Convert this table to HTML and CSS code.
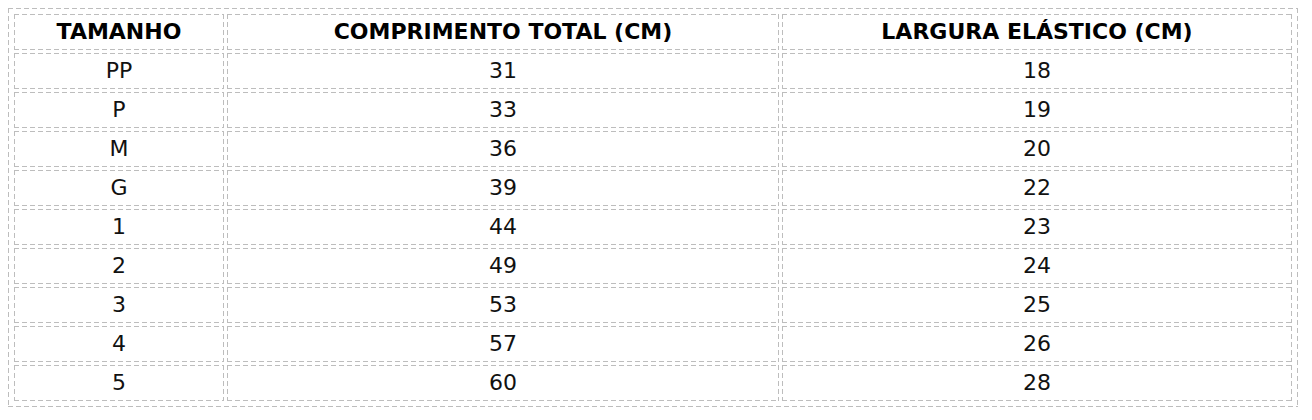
FILE: index.html
```html
<!DOCTYPE html>
<html lang="pt-BR">
<head>
<meta charset="utf-8">
<title>Tabela de medidas</title>
<link rel="stylesheet" href="styles.css">
</head>
<body>
<table class="sizes">
  <thead>
    <tr>
      <th class="c1">TAMANHO</th>
      <th class="c2">COMPRIMENTO TOTAL (CM)</th>
      <th class="c3">LARGURA ELÁSTICO (CM)</th>
    </tr>
  </thead>
  <tbody>
    <tr><td>PP</td><td>31</td><td>18</td></tr>
    <tr><td>P</td><td>33</td><td>19</td></tr>
    <tr><td>M</td><td>36</td><td>20</td></tr>
    <tr><td>G</td><td>39</td><td>22</td></tr>
    <tr><td>1</td><td>44</td><td>23</td></tr>
    <tr><td>2</td><td>49</td><td>24</td></tr>
    <tr><td>3</td><td>53</td><td>25</td></tr>
    <tr><td>4</td><td>57</td><td>26</td></tr>
    <tr><td>5</td><td>60</td><td>28</td></tr>
  </tbody>
</table>
</body>
</html>
```

FILE: styles.css
```css
html, body {
  background: #ffffff;
}
body {
  margin: 8px;
  font-family: "DejaVu Sans", Verdana, sans-serif;
  font-size: 22px;
  color: #111111;
}
.sizes {
  --dash: #bdbdbd;
  table-layout: fixed;
  width: 1290px;
  padding: 3px;
  border-spacing: 3px;
  box-sizing: border-box;
  background:
    repeating-linear-gradient(to right, var(--dash) 0 5px, transparent 5px 8px) top left / 100% 1px no-repeat,
    repeating-linear-gradient(to right, var(--dash) 0 5px, transparent 5px 8px) bottom left / 100% 1px no-repeat,
    repeating-linear-gradient(to bottom, var(--dash) 0 5px, transparent 5px 8px) top left / 1px 100% no-repeat,
    repeating-linear-gradient(to bottom, var(--dash) 0 5px, transparent 5px 8px) top right / 1px 100% no-repeat;
}
.sizes th,
.sizes td {
  box-sizing: border-box;
  height: 36px;
  padding: 5px 6px;
  line-height: 26px;
  text-align: center;
  font-weight: normal;
  background:
    repeating-linear-gradient(to right, var(--dash) 0 5px, transparent 5px 8px) top left / 100% 1px no-repeat,
    repeating-linear-gradient(to right, var(--dash) 0 5px, transparent 5px 8px) bottom left / 100% 1px no-repeat,
    repeating-linear-gradient(to bottom, var(--dash) 0 5px, transparent 5px 8px) top left / 1px 100% no-repeat,
    repeating-linear-gradient(to bottom, var(--dash) 0 5px, transparent 5px 8px) top right / 1px 100% no-repeat;
}
.sizes th {
  font-weight: bold;
  color: #000000;
}
.sizes .c1 { width: 210px; }
.sizes .c2 { width: 552px; }
.sizes .c3 { width: 510px; }
```
